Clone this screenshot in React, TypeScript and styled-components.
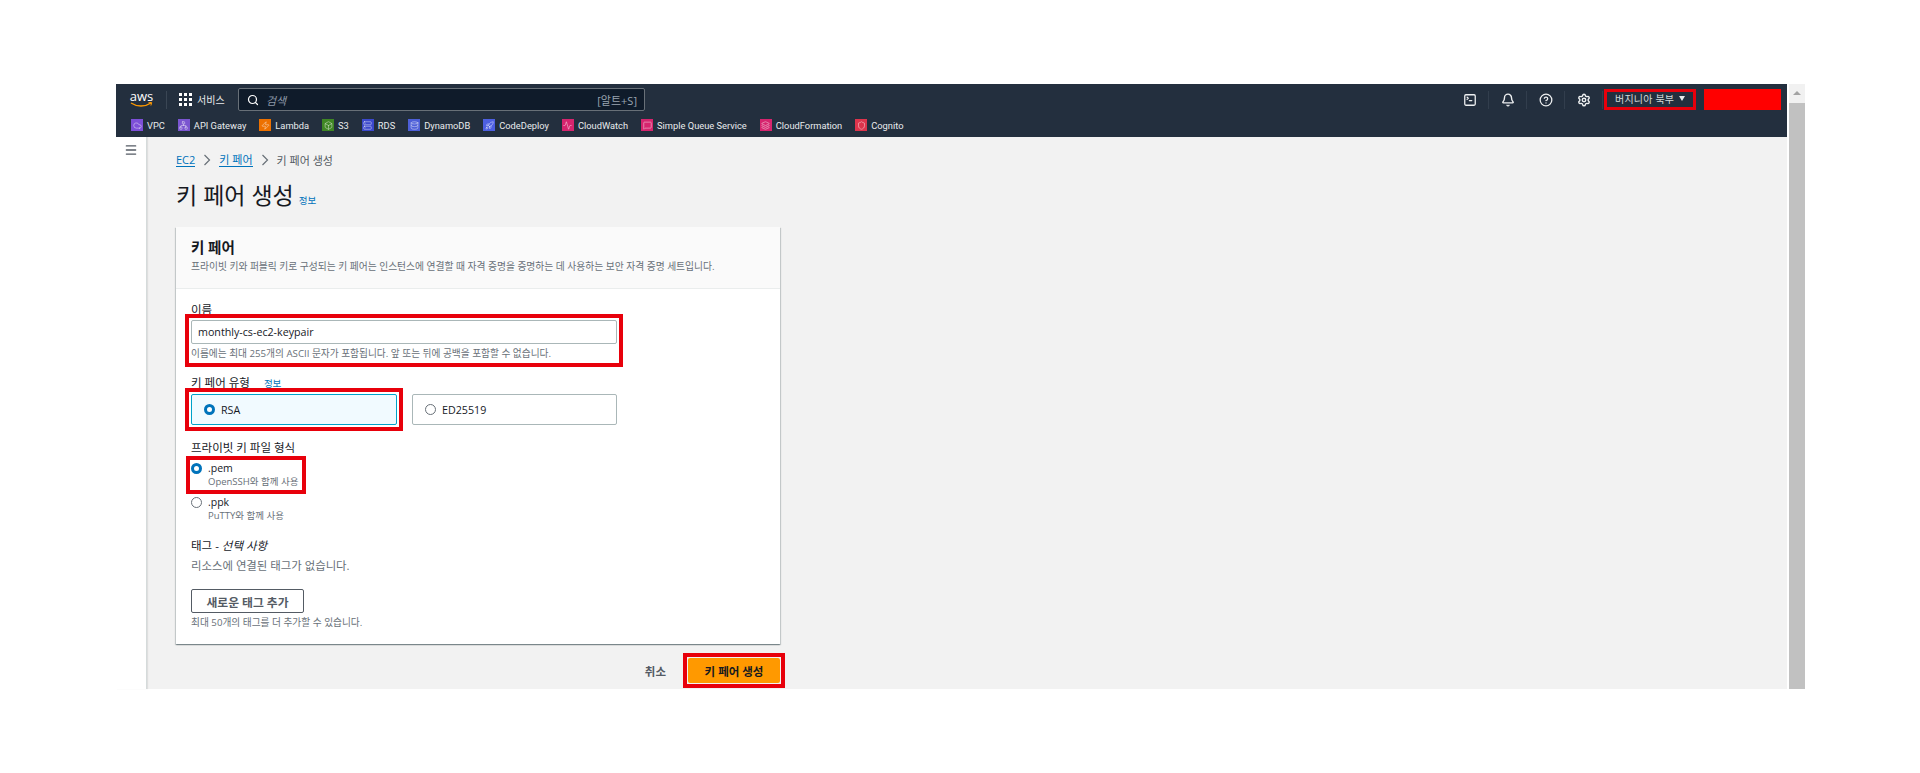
import { ReactNode } from "react";
import styled, { createGlobalStyle } from "styled-components";
import {
  Activity,
  Bell,
  Box,
  CircleHelp,
  Cloud,
  Database,
  Layers,
  Menu,
  MessageSquare,
  Network,
  Rocket,
  Search,
  Server,
  Settings,
  Shield,
  SquareTerminal,
  Zap,
} from "lucide-react";

const GlobalStyle = createGlobalStyle`
  html, body {
    margin: 0;
    padding: 0;
    background: #fff;
  }
  body {
    font-family: "Open Sans", "Noto Sans CJK KR", sans-serif;
    color: #16191f;
  }
`;

const Page = styled.div`
  box-sizing: border-box;
  width: 1920px;
  height: 773px;
  padding: 84px 115px 84px 116px;
  overflow: hidden;
`;

const Browser = styled.div`
  display: flex;
  height: 605px;
  gap: 2px;
`;

const Main = styled.div`
  flex: 1;
  display: flex;
  flex-direction: column;
  min-width: 0;
`;

const Scrollbar = styled.div`
  width: 16px;
  display: flex;
  flex-direction: column;
  align-items: center;
  background: #f1f1f1;
`;

const ScrollArrow = styled.div`
  width: 0;
  height: 0;
  margin: 7px 0 8px;
  border-left: 4px solid transparent;
  border-right: 4px solid transparent;
  border-bottom: 4px solid #a3a3a3;
`;

const ScrollThumb = styled.div`
  flex: 1;
  width: 100%;
  background: #c1c1c1;
`;

const Nav = styled.header`
  height: 53px;
  background: #232f3e;
  color: #fff;
  display: flex;
  flex-direction: column;
`;

const TopRow = styled.div`
  box-sizing: border-box;
  height: 32px;
  display: flex;
  align-items: center;
  padding: 0 0 1px 14px;
`;

const LogoWrap = styled.div`
  width: 23px;
  margin-right: 13px;
  display: flex;
  flex-direction: column;
  align-items: center;
`;

const LogoText = styled.span`
  font-size: 13px;
  line-height: 11px;
  color: #fff;
`;

const LogoSmile = styled.svg`
  width: 23px;
  height: 6px;
  fill: none;
  stroke: #ff9900;
`;

const Divider = styled.span`
  width: 1px;
  height: 18px;
  background: #3a4654;
`;

const ServicesButton = styled.div`
  display: flex;
  align-items: center;
  gap: 5px;
  margin-left: 12px;
  width: 59px;
  font-size: 10px;
  color: #e9ebed;
`;

const GridIcon = styled.svg`
  width: 13px;
  height: 13px;
  fill: #fff;
`;

const SearchBox = styled.div`
  box-sizing: border-box;
  width: 407px;
  height: 23px;
  background: #0f1b2a;
  border: 1px solid #687078;
  border-radius: 2px;
  display: flex;
  align-items: center;
  padding: 0 7px 0 8px;
  font-size: 11px;
`;

const SearchHint = styled.em`
  margin-left: 7px;
  flex: 1;
  font-size: 11px;
  color: #8d99a8;
`;

const SearchKey = styled.span`
  color: #9aa5b1;
`;

const TopRight = styled.div`
  margin-left: auto;
  display: flex;
  align-items: center;
  height: 100%;
`;

const IconCell = styled.div`
  width: 38px;
  display: flex;
  align-items: center;
  justify-content: center;
  border-right: 1px solid #323e4d;
  height: 18px;
  box-sizing: border-box;
  color: #eef0f1;
`;

const Region = styled.div`
  box-sizing: border-box;
  width: 92px;
  height: 21px;
  margin-left: 1px;
  outline: 3px solid #e8000b;
  outline-offset: -3px;
  display: flex;
  align-items: center;
  gap: 5px;
  padding-left: 11px;
  padding-bottom: 3px;
  font-size: 10px;
  letter-spacing: 0.2px;
  color: #d5dbdb;
`;

const Caret = styled.span`
  width: 0;
  height: 0;
  border-left: 3.5px solid transparent;
  border-right: 3.5px solid transparent;
  border-top: 5px solid #e9ebed;
`;

const Account = styled.div`
  width: 77px;
  height: 21px;
  margin: 0 6px 0 8px;
  background: #ff0000;
`;

const Favorites = styled.div`
  flex: 1;
  display: flex;
  align-items: center;
  gap: 13px;
  padding-left: 15px;
  padding-bottom: 3px;
`;

const Favorite = styled.div`
  display: flex;
  align-items: center;
  gap: 4px;
  font-family: Roboto, "Noto Sans CJK KR", sans-serif;
  font-size: 9.3px;
  font-weight: 400;
  color: #e9ebed;
  white-space: nowrap;
`;

const ServiceIcon = styled.span<{ $bg: string }>`
  width: 12px;
  height: 12px;
  display: inline-flex;
  align-items: center;
  justify-content: center;
  background: ${(p) => p.$bg};
  color: rgba(255, 255, 255, 0.75);
`;

const Body = styled.div`
  flex: 1;
  display: flex;
  background: #f2f2f2;
  min-height: 0;
`;

const SideRail = styled.aside`
  box-sizing: border-box;
  width: 31px;
  flex-shrink: 0;
  background: #fff;
  border-right: 1px solid #d5dbdb;
  box-shadow: 1px 0 1px rgba(0, 0, 0, 0.08);
  display: flex;
  justify-content: center;
  padding-top: 6px;
  color: #545b64;
`;

const Content = styled.main`
  flex: 1;
  padding: 13px 0 0 29px;
  min-width: 0;
`;

const Crumbs = styled.nav`
  display: flex;
  align-items: center;
  height: 20px;
  font-size: 11px;
  color: #545b64;
`;

const CrumbLink = styled.a`
  color: #0073bb;
  border-bottom: 1px solid #0073bb;
  line-height: 13px;
`;

const CrumbSep = styled.svg`
  width: 8px;
  height: 12px;
  margin: 0 8px;
  fill: none;
  stroke: #687078;
  stroke-width: 1.2;
`;

const TitleRow = styled.div`
  display: flex;
  align-items: baseline;
  gap: 5px;
  margin-top: 9px;
  height: 35px;
`;

const Title = styled.h1`
  margin: 0;
  font-size: 23px;
  font-weight: 400;
  line-height: 32px;
  color: #16191f;
`;

const InfoLink = styled.a`
  font-size: 9.5px;
  color: #0073bb;
`;

const Card = styled.section`
  box-sizing: border-box;
  width: 604px;
  height: 417px;
  margin-top: 13px;
  background: #fff;
  box-shadow: 0 1px 1px 0 rgba(0, 28, 36, 0.3), 1px 1px 1px 0 rgba(0, 28, 36, 0.15),
    -1px 1px 1px 0 rgba(0, 28, 36, 0.15);
`;

const CardHeader = styled.div`
  box-sizing: border-box;
  height: 62px;
  background: #fafafa;
  border-bottom: 1px solid #eaeded;
  padding: 12px 15px 0;
`;

const CardTitle = styled.h2`
  margin: 0;
  font-size: 14.5px;
  line-height: 17px;
  font-weight: 600;
`;

const CardDescription = styled.p`
  margin: 4px 0 0;
  font-size: 9.75px;
  line-height: 14px;
  color: #687078;
  white-space: nowrap;
`;

const CardBody = styled.div`
  padding: 14px 15px 0;
  display: flex;
  flex-direction: column;
`;

const Label = styled.div<{ $top?: number }>`
  font-size: 11.5px;
  line-height: 14px;
  margin-top: ${(p) => p.$top ?? 0}px;
  color: #16191f;
`;

const LabelRow = styled.div`
  display: flex;
  align-items: center;
  gap: 14px;
  margin-top: 15px;
`;

// 참고 이미지의 빨간 강조 테두리
const Marked = styled.div<{ $offset: number; $top?: number; $width?: number }>`
  outline: 4px solid #e8000b;
  outline-offset: ${(p) => p.$offset}px;
  margin-top: ${(p) => p.$top ?? 0}px;
  ${(p) => (p.$width ? `width: ${p.$width}px;` : "")}
`;

const Input = styled.div`
  box-sizing: border-box;
  height: 24px;
  border: 1px solid #aab7b8;
  border-radius: 2px;
  background: #fff;
  display: flex;
  align-items: center;
  padding: 0 6px;
  font-size: 10.7px;
  color: #16191f;
`;

const Hint = styled.div<{ $top: number }>`
  font-size: 9.7px;
  line-height: 14px;
  margin-top: ${(p) => p.$top}px;
  color: #687078;
  white-space: nowrap;
`;

const TileRow = styled.div`
  display: flex;
  gap: 15px;
  margin-top: 4px;
`;

const Tile = styled.div<{ $selected?: boolean }>`
  box-sizing: border-box;
  width: ${(p) => (p.$selected ? 206 : 205)}px;
  height: 31px;
  display: flex;
  align-items: center;
  gap: 6px;
  padding-left: 12px;
  font-size: 10.7px;
  border-radius: 2px;
  border: 1px solid ${(p) => (p.$selected ? "#00a1c9" : "#aab7b8")};
  background: ${(p) => (p.$selected ? "#f1faff" : "#fff")};
`;

const Radio = styled.span<{ $checked?: boolean }>`
  box-sizing: border-box;
  width: 11px;
  height: 11px;
  flex-shrink: 0;
  border-radius: 50%;
  background: #fff;
  border: ${(p) => (p.$checked ? "3.5px solid #0073bb" : "1px solid #687078")};
`;

const OptionGroup = styled.div`
  margin-top: 6px;
  width: 110px;
`;

const Option = styled.div<{ $top?: number }>`
  display: grid;
  grid-template-columns: 11px auto;
  column-gap: 6px;
  align-items: center;
  margin-top: ${(p) => p.$top ?? 0}px;
  white-space: nowrap;
`;

const OptionName = styled.div`
  font-size: 10.5px;
  line-height: 14px;
`;

const OptionSub = styled.div`
  grid-column: 2;
  font-size: 9.5px;
  line-height: 14px;
  color: #687078;
`;

const Optional = styled.em`
  font-style: italic;
`;

const Empty = styled.div`
  font-size: 11.4px;
  line-height: 14px;
  margin-top: 6px;
  color: #687078;
`;

const OutlineButton = styled.button`
  box-sizing: border-box;
  width: 113px;
  height: 24px;
  margin-top: 16px;
  padding: 0;
  border: 1px solid #545b64;
  border-radius: 2px;
  background: #fff;
  font-family: inherit;
  font-size: 11.8px;
  font-weight: 600;
  color: #545b64;
`;

const Actions = styled.div`
  width: 604px;
  display: flex;
  justify-content: flex-end;
  align-items: center;
  gap: 22px;
  margin-top: 14px;
`;

const Cancel = styled.span`
  font-size: 11.5px;
  font-weight: 600;
  color: #545b64;
`;

const PrimaryButton = styled.button`
  box-sizing: border-box;
  width: 92px;
  height: 25px;
  padding: 0;
  border: none;
  border-radius: 2px;
  background: #ff9900;
  display: block;
  font-family: inherit;
  font-size: 11.5px;
  font-weight: 700;
  color: #16191f;
`;

type Fav = { name: string; bg: string; icon: ReactNode };

const glyph = { size: 9, strokeWidth: 1.5 };

const favorites: Fav[] = [
  { name: "VPC", bg: "#7d4fd8", icon: <Cloud {...glyph} /> },
  { name: "API Gateway", bg: "#7a55d0", icon: <Network {...glyph} /> },
  { name: "Lambda", bg: "#ed7100", icon: <Zap {...glyph} /> },
  { name: "S3", bg: "#3f8624", icon: <Box {...glyph} /> },
  { name: "RDS", bg: "#3b48cc", icon: <Server {...glyph} /> },
  { name: "DynamoDB", bg: "#4d5fd8", icon: <Database {...glyph} /> },
  { name: "CodeDeploy", bg: "#4d5fe0", icon: <Rocket {...glyph} /> },
  { name: "CloudWatch", bg: "#d6246e", icon: <Activity {...glyph} /> },
  { name: "Simple Queue Service", bg: "#d6246e", icon: <MessageSquare {...glyph} /> },
  { name: "CloudFormation", bg: "#d6246e", icon: <Layers {...glyph} /> },
  { name: "Cognito", bg: "#dd344c", icon: <Shield {...glyph} /> },
];

const gridCells = [0, 1, 2].flatMap((row) => [0, 1, 2].map((col) => ({ row, col })));

export default function App() {
  return (
    <Page>
      <GlobalStyle />
      <Browser>
        <Main>
          <Nav>
            <TopRow>
              <LogoWrap>
                <LogoText>aws</LogoText>
                <LogoSmile viewBox="0 0 23 6">
                  <path d="M1 1c6 4 14 4 20 0" strokeWidth="1.3" />
                  <path d="M18.5 0.7l3.2-.2-.8 3" strokeWidth="1" />
                </LogoSmile>
              </LogoWrap>
              <Divider />
              <ServicesButton>
                <GridIcon viewBox="0 0 13 13">
                  {gridCells.map(({ row, col }) => (
                    <rect key={`${row}-${col}`} x={col * 5} y={row * 5} width="3" height="3" />
                  ))}
                </GridIcon>
                서비스
              </ServicesButton>
              <SearchBox>
                <Search size={12} color="#fff" strokeWidth={2.4} />
                <SearchHint>검색</SearchHint>
                <SearchKey>[알트+S]</SearchKey>
              </SearchBox>
              <TopRight>
                <IconCell>
                  <SquareTerminal size={14} strokeWidth={2.2} />
                </IconCell>
                <IconCell>
                  <Bell size={14} strokeWidth={2.4} />
                </IconCell>
                <IconCell>
                  <CircleHelp size={14} strokeWidth={2.2} />
                </IconCell>
                <IconCell>
                  <Settings size={14} strokeWidth={2.4} />
                </IconCell>
                <Region>
                  버지니아 북부
                  <Caret />
                </Region>
                <Account />
              </TopRight>
            </TopRow>
            <Favorites>
              {favorites.map((f) => (
                <Favorite key={f.name}>
                  <ServiceIcon $bg={f.bg}>{f.icon}</ServiceIcon>
                  {f.name}
                </Favorite>
              ))}
            </Favorites>
          </Nav>
          <Body>
            <SideRail>
              <Menu size={14} strokeWidth={2.2} />
            </SideRail>
            <Content>
              <Crumbs>
                <CrumbLink>EC2</CrumbLink>
                <CrumbSep viewBox="0 0 8 12">
                  <path d="M1.5 1l5 5-5 5" />
                </CrumbSep>
                <CrumbLink>키 페어</CrumbLink>
                <CrumbSep viewBox="0 0 8 12">
                  <path d="M1.5 1l5 5-5 5" />
                </CrumbSep>
                키 페어 생성
              </Crumbs>
              <TitleRow>
                <Title>키 페어 생성</Title>
                <InfoLink>정보</InfoLink>
              </TitleRow>
              <Card>
                <CardHeader>
                  <CardTitle>키 페어</CardTitle>
                  <CardDescription>
                    프라이빗 키와 퍼블릭 키로 구성되는 키 페어는 인스턴스에 연결할 때 자격 증명을 증명하는 데 사용하는 보안 자격 증명 세트입니다.
                  </CardDescription>
                </CardHeader>
                <CardBody>
                  <Label>이름</Label>
                  <Marked $offset={2} $top={3} $width={426}>
                    <Input>monthly-cs-ec2-keypair</Input>
                    <Hint $top={3}>이름에는 최대 255개의 ASCII 문자가 포함됩니다. 앞 또는 뒤에 공백을 포함할 수 없습니다.</Hint>
                  </Marked>
                  <LabelRow>
                    <Label>키 페어 유형</Label>
                    <InfoLink>정보</InfoLink>
                  </LabelRow>
                  <TileRow>
                    <Marked $offset={2}>
                      <Tile $selected>
                        <Radio $checked />
                        RSA
                      </Tile>
                    </Marked>
                    <Tile>
                      <Radio />
                      ED25519
                    </Tile>
                  </TileRow>
                  <Label $top={16}>프라이빗 키 파일 형식</Label>
                  <OptionGroup>
                    <Marked $offset={1}>
                      <Option>
                        <Radio $checked />
                        <OptionName>.pem</OptionName>
                        <OptionSub>OpenSSH와 함께 사용</OptionSub>
                      </Option>
                    </Marked>
                    <Option $top={6}>
                      <Radio />
                      <OptionName>.ppk</OptionName>
                      <OptionSub>PuTTY와 함께 사용</OptionSub>
                    </Option>
                  </OptionGroup>
                  <Label $top={16}>
                    태그 - <Optional>선택 사항</Optional>
                  </Label>
                  <Empty>리소스에 연결된 태그가 없습니다.</Empty>
                  <OutlineButton>새로운 태그 추가</OutlineButton>
                  <Hint $top={3}>최대 50개의 태그를 더 추가할 수 있습니다.</Hint>
                </CardBody>
              </Card>
              <Actions>
                <Cancel>취소</Cancel>
                <Marked $offset={1}>
                  <PrimaryButton>키 페어 생성</PrimaryButton>
                </Marked>
              </Actions>
            </Content>
          </Body>
        </Main>
        <Scrollbar>
          <ScrollArrow />
          <ScrollThumb />
        </Scrollbar>
      </Browser>
    </Page>
  );
}
